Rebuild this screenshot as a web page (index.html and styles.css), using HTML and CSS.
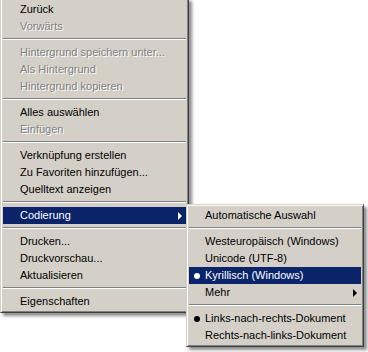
FILE: index.html
```html
<!DOCTYPE html>
<html lang="de">
<head>
<meta charset="UTF-8">
<title>Kontextmenü</title>
<link rel="stylesheet" href="styles.css">
</head>
<body>

<div class="screen">
  <ul class="menu main-menu">
    <li class="item">Zurück</li>
    <li class="item disabled">Vorwärts</li>
    <li class="sep"></li>
    <li class="item disabled">Hintergrund speichern unter...</li>
    <li class="item disabled">Als Hintergrund</li>
    <li class="item disabled">Hintergrund kopieren</li>
    <li class="sep"></li>
    <li class="item">Alles auswählen</li>
    <li class="item disabled">Einfügen</li>
    <li class="sep"></li>
    <li class="item">Verknüpfung erstellen</li>
    <li class="item">Zu Favoriten hinzufügen...</li>
    <li class="item">Quelltext anzeigen</li>
    <li class="sep"></li>
    <li class="item active has-sub">Codierung</li>
    <li class="sep"></li>
    <li class="item">Drucken...</li>
    <li class="item">Druckvorschau...</li>
    <li class="item">Aktualisieren</li>
    <li class="sep"></li>
    <li class="item">Eigenschaften</li>
  </ul>

  <!-- Untermenü "Codierung" -->
  <ul class="menu sub-menu">
    <li class="item">Automatische Auswahl</li>
    <li class="sep"></li>
    <li class="item">Westeuropäisch (Windows)</li>
    <li class="item">Unicode (UTF-8)</li>
    <li class="item active checked">Kyrillisch (Windows)</li>
    <li class="item has-sub">Mehr</li>
    <li class="sep"></li>
    <li class="item checked">Links-nach-rechts-Dokument</li>
    <li class="item">Rechts-nach-links-Dokument</li>
  </ul>
</div>

</body>
</html>
```

FILE: styles.css
```css
body {
  margin: 0;
  background: #ffffff;
  font-family: "Liberation Sans", Arial, sans-serif;
  font-size: 11px;
  color: #000000;
}
.screen {
  position: relative;
  width: 368px;
  height: 352px;
  overflow: hidden;
}
.menu {
  list-style: none;
  margin: 0;
  padding: 2px;
  background: #d4d0c8;
  border-style: solid;
  border-width: 1px;
  border-color: #d4d0c8 #404040 #404040 #d4d0c8;
  box-shadow: inset 1px 1px 0 #ffffff, inset -1px -1px 0 #808080, 3px 3px 3px rgba(0, 0, 0, 0.45);
  box-sizing: border-box;
}
.main-menu {
  width: 189px;
  margin-top: -2px; /* oberer Rand ist im Bild abgeschnitten */
}
.sub-menu {
  position: absolute;
  left: 186px;
  top: 204px;
  width: 178px;
}
.item {
  position: relative;
  height: 17px;
  line-height: 17px;
  padding-left: 17px;
  white-space: nowrap;
}
.sub-menu .item {
  padding-left: 16px;
}
.disabled {
  color: #808080;
  text-shadow: 1px 1px 0 #ffffff;
}
.active {
  background: #0a246a;
  color: #ffffff;
}
.sep {
  height: 9px;
  position: relative;
}
.sep::before {
  content: "";
  position: absolute;
  left: 0;
  right: 0;
  top: 3px;
  height: 1px;
  background: #808080;
  border-bottom: 1px solid #ffffff;
}
.has-sub::after {
  content: "";
  position: absolute;
  right: 4px;
  top: 5px;
  border-style: solid;
  border-width: 4px 0 4px 4px;
  border-color: transparent transparent transparent currentColor;
}
.checked::before {
  content: "";
  position: absolute;
  left: 5px;
  top: 6px;
  width: 6px;
  height: 6px;
  border-radius: 50%;
  background: currentColor;
}
```
